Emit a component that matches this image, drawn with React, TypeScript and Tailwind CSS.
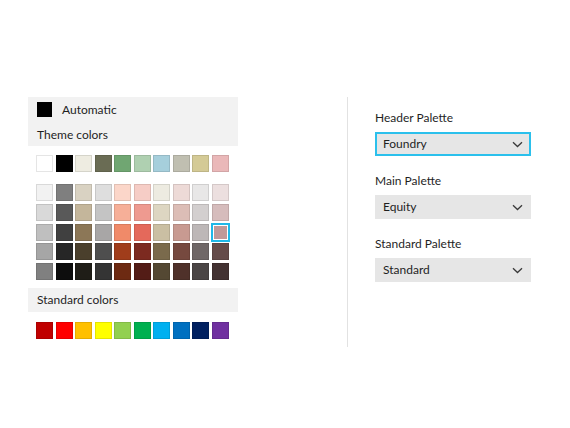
import React from "react";

const themeTop = ["#ffffff", "#000000", "#eeece1", "#6a6c54", "#70a672", "#afd0b1", "#a6cfdc", "#c0bfb1", "#d4ca96", "#eab8b9"];

const grid = [
  ["#f2f2f2", "#7f7f7f", "#d9d2c2", "#dedede", "#fbd6c9", "#f6cdc6", "#edebe1", "#eddad7", "#e8e7e7", "#ecdfdf"],
  ["#d9d9d9", "#595959", "#c4b69b", "#c4c4c4", "#f6af98", "#ee9a90", "#ddd6c2", "#dcbdb6", "#d3cfcf", "#d6bcbc"],
  ["#bfbfbf", "#404040", "#8c7757", "#a8a6a6", "#f08a69", "#e4695b", "#cabfa3", "#c89a91", "#bdb7b7", "#bf9999"],
  ["#a6a6a6", "#262626", "#4a3f2c", "#4e4e4e", "#a03d1b", "#7c2a20", "#7a6a4c", "#76493f", "#6f6767", "#654b49"],
  ["#808080", "#0d0d0d", "#1f1d17", "#343434", "#6d2a12", "#531c16", "#544833", "#4f312a", "#4a4545", "#433232"],
];

const standard = ["#c00000", "#ff0000", "#ffc000", "#ffff00", "#92d050", "#00b050", "#00b0f0", "#0070c0", "#002060", "#7030a0"];

function Swatch({ color, selected }: { color: string; selected?: boolean }) {
  if (selected) {
    return (
      <div className="w-[19px] h-[19px] -m-px border-2 border-[#1fb8e8] p-px bg-white/40">
        <div className="w-full h-full" style={{ backgroundColor: color }} />
      </div>
    );
  }
  return <div className="w-[17px] h-[17px] border border-black/10" style={{ backgroundColor: color }} />;
}

function Row({ colors, selectedIndex }: { colors: string[]; selectedIndex?: number }) {
  return (
    <div className="flex justify-between w-[193px] items-center h-[17px]">
      {colors.map((c, i) => (
        <Swatch key={i} color={c} selected={i === selectedIndex} />
      ))}
    </div>
  );
}

function Chevron() {
  return (
    <svg width="11" height="7" viewBox="0 0 11 7" fill="none">
      <path d="M1 1.2 L5.5 5.5 L10 1.2" stroke="#3a3a3a" strokeWidth="1.3" />
    </svg>
  );
}

function Dropdown({ label, value, focused }: { label: string; value: string; focused?: boolean }) {
  return (
    <div className="flex flex-col">
      <div className="h-[16px] leading-[16px] text-[12px] text-[#1f1f1f]">{label}</div>
      <div
        className={
          "mt-[6px] h-[24px] bg-[#e6e6e6] flex items-center justify-between " +
          (focused ? "border-2 border-[#2bc0ec] pl-[6px] pr-[6px]" : "pl-[8px] pr-[8px]")
        }
      >
        <span className="text-[12px] leading-[16px] text-[#1f1f1f]">{value}</span>
        <Chevron />
      </div>
    </div>
  );
}

export default function App() {
  return (
    <div
      className="w-[570px] h-[428px] bg-white flex items-start pt-[97px]"
      style={{ fontFamily: 'Lato, "Open Sans", sans-serif' }}
    >
      <div className="ml-[28px] w-[210px] flex flex-col">
        <div className="bg-[#f2f2f2] h-[49px] pt-[4px] pl-[9px] flex flex-col">
          <div className="flex items-center h-[16px]">
            <div className="w-[15px] h-[15px] bg-black" />
            <span className="ml-[10px] text-[12px] leading-[16px] pt-[1px] text-[#1f1f1f]">Automatic</span>
          </div>
          <div className="mt-[10px] h-[16px] leading-[16px] text-[12px] text-[#1f1f1f]">Theme colors</div>
        </div>
        <div className="pl-[8px] mt-[9px]">
          <Row colors={themeTop} />
        </div>
        <div className="pl-[8px] mt-[12px] flex flex-col gap-[2.75px]">
          {grid.map((r, i) => (
            <Row key={i} colors={r} selectedIndex={i === 2 ? 9 : undefined} />
          ))}
        </div>
        <div className="mt-[8px] bg-[#f2f2f2] h-[24px] pl-[9px] flex items-center text-[12px] leading-[16px] text-[#1f1f1f]">
          Standard colors
        </div>
        <div className="pl-[8px] mt-[10px]">
          <Row colors={standard} />
        </div>
      </div>
      <div className="ml-[109px] w-px h-[250px] bg-[#e2e2e2]" />
      <div className="ml-[27px] w-[156px] pt-[13px] flex flex-col gap-[17px]">
        <Dropdown label="Header Palette" value="Foundry" focused />
        <Dropdown label="Main Palette" value="Equity" />
        <Dropdown label="Standard Palette" value="Standard" />
      </div>
    </div>
  );
}
